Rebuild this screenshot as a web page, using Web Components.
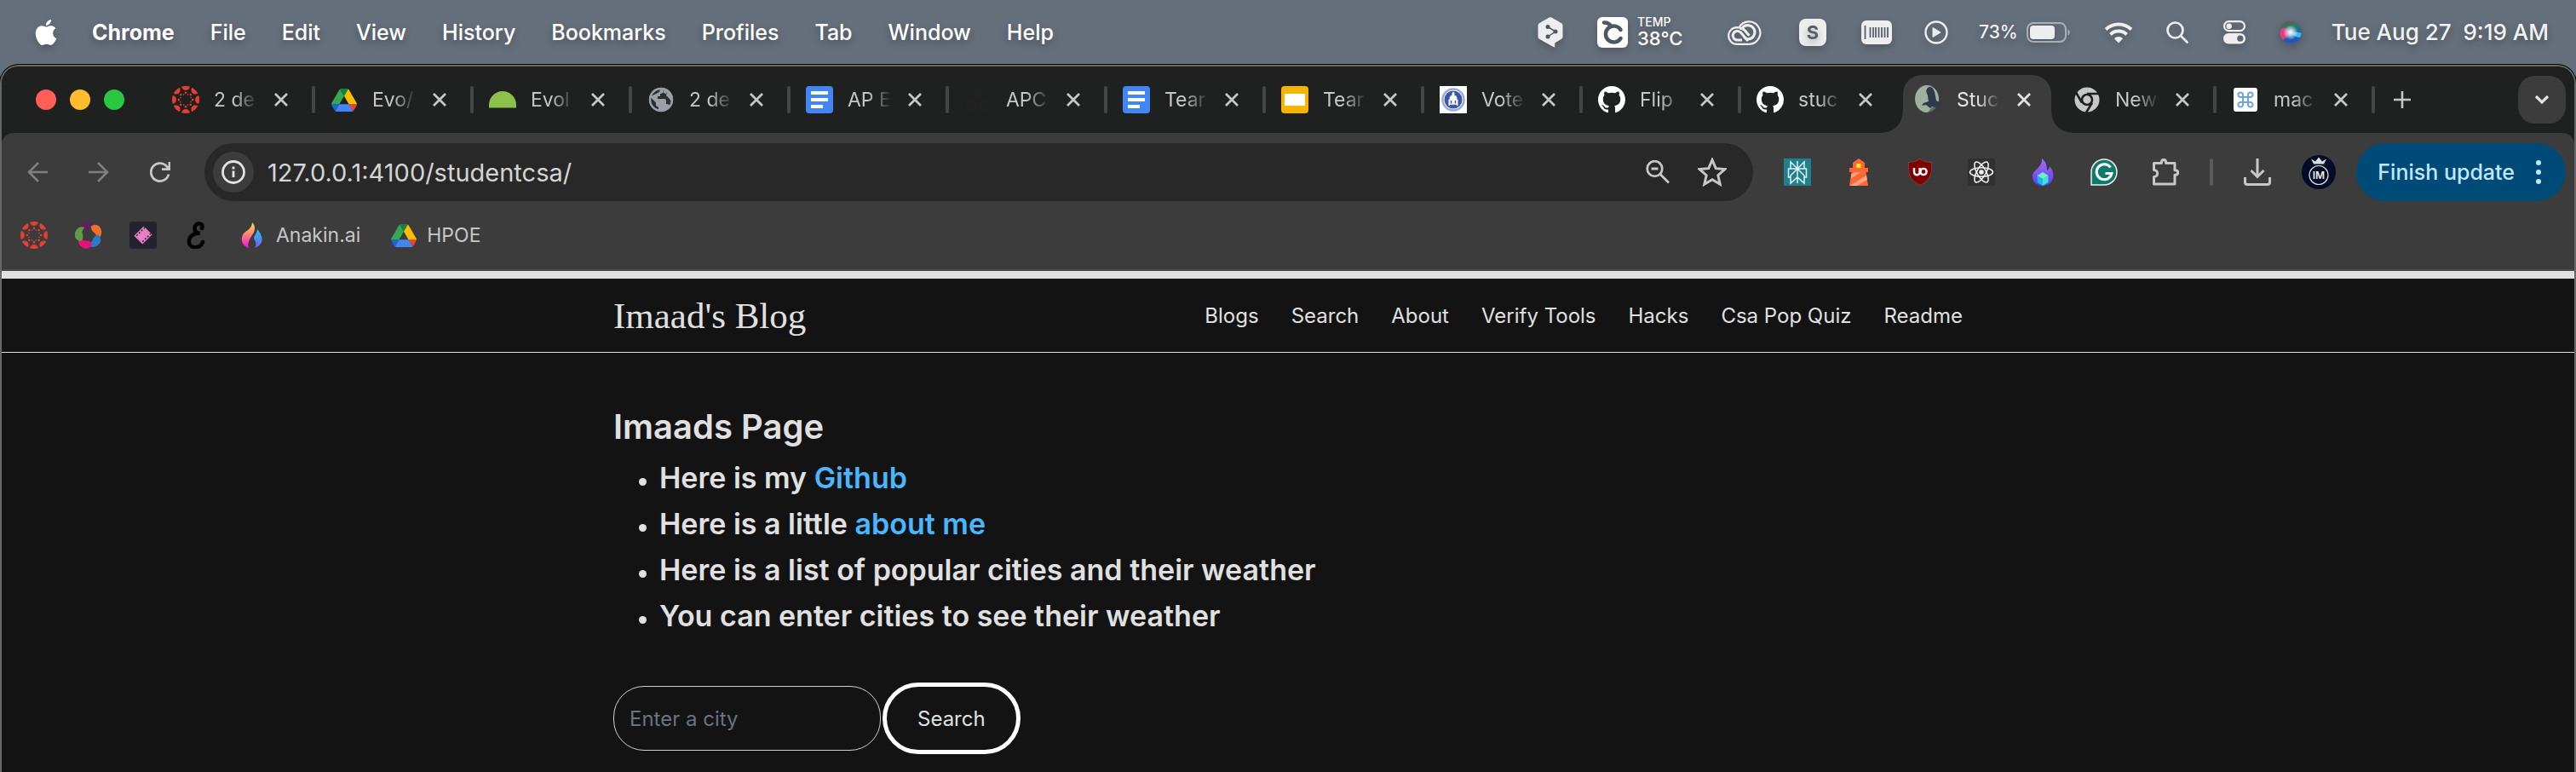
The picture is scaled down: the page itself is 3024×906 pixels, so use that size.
<!DOCTYPE html>
<html lang="en">
<head>
<meta charset="utf-8">
<title>Studentcsa | Imaad's Blog</title>
<style>
  html, body { margin: 0; min-height: 100vh; background: #131313; }
  body { font-family: Inter, "Liberation Sans", sans-serif; color: #e0e0e0; display: flex; flex-direction: column; background: linear-gradient(#656f7b 100px, #131313 100px); }
  browser-window { flex: 1; }
</style>
</head>
<body>
<mac-menu-bar></mac-menu-bar>
<browser-window>
  <tab-strip slot="chrome">
    <browser-tab icon="canvas" label="2 de"></browser-tab>
    <browser-tab icon="drive" label="Evo/"></browser-tab>
    <browser-tab icon="evol" label="Evol"></browser-tab>
    <browser-tab icon="globe" label="2 de"></browser-tab>
    <browser-tab icon="docs" label="AP E"></browser-tab>
    <browser-tab icon="faint" label="APC"></browser-tab>
    <browser-tab icon="docs" label="Tear"></browser-tab>
    <browser-tab icon="slides" label="Tear"></browser-tab>
    <browser-tab icon="seal" label="Vote"></browser-tab>
    <browser-tab icon="github" label="Flip"></browser-tab>
    <browser-tab icon="github" label="stuc"></browser-tab>
    <browser-tab icon="student" label="Stuc" active></browser-tab>
    <browser-tab icon="chrome" label="New"></browser-tab>
    <browser-tab icon="command" label="mac"></browser-tab>
  </tab-strip>
  <tool-bar slot="chrome"></tool-bar>
  <bookmark-bar slot="chrome"></bookmark-bar>
  <site-header></site-header>
  <site-page></site-page>
</browser-window>

<script>
const turn = (n, shape, start = 0) => Array.from({ length: n }, (_, i) => `<g transform="rotate(${start + i * 360 / n} 16 16)">${shape}</g>`).join('');

const ICONS = {
  apple: ['0 0 24 24', `<path fill="#fff" d="M12.152 6.896c-.948 0-2.415-1.078-3.96-1.04-2.04.027-3.91 1.183-4.961 3.014-2.117 3.675-.546 9.103 1.519 12.09 1.013 1.454 2.208 3.09 3.792 3.039 1.52-.065 2.09-.987 3.935-.987 1.831 0 2.35.987 3.96.948 1.637-.026 2.676-1.48 3.676-2.948 1.156-1.688 1.636-3.325 1.662-3.415-.039-.013-3.182-1.221-3.22-4.857-.026-3.04 2.48-4.494 2.597-4.559-1.429-2.09-3.623-2.324-4.39-2.376-2-.156-3.675 1.09-4.61 1.09zM15.53 3.83c.843-1.012 1.4-2.427 1.245-3.83-1.207.052-2.662.805-3.532 1.818-.78.896-1.454 2.338-1.273 3.714 1.338.104 2.715-.688 3.559-1.701"/>`],
  deepl: ['0 0 30 36', `<path fill="#eee" d="M13.5.6a3 3 0 0 1 3 0L28 7.3a3 3 0 0 1 1.5 2.6v13.3a3 3 0 0 1-1.5 2.6l-7.8 4.6v5.4l-5-2.6L2 25.8a3 3 0 0 1-1.500-2.600V9.900A3 3 0 0 1 2 7.300z"/><g stroke="#4d5763" stroke-width="1.500" fill="none"><path d="M12 11.500l9 5.500-9 6"/></g><g fill="#4d5763"><circle cx="12" cy="11.500" r="2.500"/><circle cx="21" cy="17" r="2.500"/><circle cx="12" cy="23" r="2.500"/></g>`],
  temp: ['0 0 36 36', `<rect width="36" height="36" rx="6" fill="#fff"/><path d="M8 6.500c3 0 6 1 8 4" stroke="#4d5763" stroke-width="4.500" fill="none" stroke-linecap="round"/><path d="M27.500 15a9.500 9.500 0 1 0 0 10" stroke="#4d5763" stroke-width="4.500" fill="none" stroke-linecap="round"/>`],
  cloud: ['0 0 40 30', `<g fill="none" stroke="#eee" stroke-width="2.200"><path d="M11 28.800a9.800 9.800 0 0 1 0-19.600l2.500.2A13.200 13.200 0 1 1 26 28.800z"/><g stroke-width="3"><path d="M17 24h-5.500a5.300 5.300 0 1 1 3.900-8.900L24 25"/><path d="M17.500 9.500a8.200 8.200 0 1 1 7 13.500c-2.200 0-3.800-1-5-2.500M14 10c3 .2 5 1.300 6.500 3l5 5.800"/></g></g>`],
  sBox: ['0 0 32 32', `<rect width="32" height="32" rx="8" fill="#eee"/><text x="16" y="24" text-anchor="middle" font-family="Inter" font-weight="700" font-size="22" fill="#56606c">S</text>`],
  barcode: ['0 0 36 28', `<rect width="36" height="28" rx="6" fill="#eee"/><path d="M4.500 6v16M10.500 8v12M14 8v12M17 8v12M20.500 8v12M24 8v12M27.500 8v12M31 8v12" stroke="#56606c" stroke-width="1.800"/>`],
  play: ['0 0 28 28', `<circle cx="14" cy="14" r="12.500" fill="none" stroke="#eee" stroke-width="2.400"/><path d="M10 8.500v11l9-5.500z" fill="#eee" stroke="#eee" stroke-linejoin="round"/>`],
  battery: ['0 0 52 24', `<rect x="1" y="1" width="45" height="22" rx="7" fill="none" stroke="#a9afb6" stroke-width="2"/><rect x="4" y="4" width="29" height="16" rx="4" fill="#eee"/><path d="M48.500 8.500c3 1 3 6 0 7z" fill="#a9afb6"/>`],
  wifi: ['0 0 34 26', `<g fill="none" stroke="#eee" stroke-width="4"><path d="M2 9.500a21.500 21.500 0 0 1 30 0"/><path d="M7.500 15.500a13.500 13.500 0 0 1 19 0"/></g><path d="M17 25.500l-5.200-5.300a7.500 7.500 0 0 1 10.400 0z" fill="#eee"/>`],
  lens: ['0 0 26 26', `<g fill="none" stroke="#eee" stroke-width="2.700" stroke-linecap="round"><circle cx="10.500" cy="10.500" r="9"/><path d="M17 17l7.500 7.500"/></g>`],
  control: ['0 0 28 28', `<rect x="2" y="1.200" width="24" height="11" rx="5.500" fill="none" stroke="#eee" stroke-width="2.200"/><circle cx="7.700" cy="6.700" r="3.200" fill="#eee"/><rect x="1" y="15" width="26" height="12.500" rx="6.200" fill="#eee"/><circle cx="20.800" cy="21.200" r="3.600" fill="#5d6773"/>`],
  siri: ['0 0 28 28', `<defs><radialGradient id="a"><stop offset="0" stop-color="#fff"/><stop offset=".35" stop-color="#dfeeff" stop-opacity=".8"/><stop offset="1" stop-color="#fff" stop-opacity="0"/></radialGradient><linearGradient id="b" x2=".3" y2="1"><stop stop-color="#553"/><stop offset=".35" stop-color="#2a7c6a"/><stop offset="1" stop-color="#1557c8"/></linearGradient></defs><circle cx="14" cy="14" r="13.500" fill="url(#b)"/><path d="M1 15C3 6 9 8 14 14c-3 6-7 7-9 9a13 13 0 0 1-4-8z" fill="#e23f80"/><path d="M27 15c-3-1-7-2-12 0 4 4 7 5 10 5a13 13 0 0 0 2-5z" fill="#35bdf0"/><circle cx="14" cy="14" r="8.500" fill="url(#a)"/><circle cx="14" cy="14" r="13" fill="none" stroke="#a34a68" stroke-opacity=".6"/>`],
  canvas: ['0 0 32 32', `<clipPath id="c"><circle cx="16" cy="16" r="16"/></clipPath><g fill="#e63e2f" clip-path="url(#c)">${turn(8, '<circle cx="16" cy="0" r="4.900"/>')}${turn(8, '<circle cx="16" cy="7.800" r="1.300"/>')}${turn(8, '<circle cx="16" cy="9.400" r=".8"/>', 22.5)}</g>`],
  drive: ['0 0 87.3 78', `<path fill="#1967d2" d="M6.600 66.850l3.850 6.650c.8 1.400 1.950 2.500 3.300 3.300L27.500 53H0c0 1.550.4 3.100 1.200 4.500z"/><path fill="#34a853" d="M43.650 25L29.900 1.200c-1.350.8-2.500 1.900-3.300 3.300l-25.400 44A9.060 9.060 0 0 0 0 53h27.500z"/><path fill="#ea4335" d="M73.550 76.800c1.350-.8 2.500-1.900 3.300-3.300l1.600-2.750 7.650-13.250c.8-1.400 1.200-2.950 1.200-4.500H59.800l5.850 11.500z"/><path fill="#188038" d="M43.650 25L57.400 1.200C56.050.4 54.500 0 52.900 0H34.400c-1.600 0-3.150.45-4.500 1.200z"/><path fill="#4285f4" d="M59.800 53H27.500L13.750 76.800c1.350.8 2.900 1.200 4.500 1.200h50.800c1.600 0 3.150-.45 4.500-1.200z"/><path fill="#fbbc04" d="M73.400 26.500l-12.700-22c-.8-1.400-1.950-2.500-3.300-3.300L43.650 25 59.800 53h27.450c0-1.550-.4-3.100-1.200-4.500z"/>`],
  evol: ['0 0 32 32', `<path fill="#8bc34a" d="M0 25.500V22a16 16 0 0 1 32 0v3.500z"/>`],
  globe: ['0 0 32 32', `<circle cx="16" cy="16" r="14" fill="#9aa0a6"/><path fill="#1f2120" d="M13 29.500A13 13 0 0 1 3.500 13L10 19.500v2a3 3 0 0 0 3 3zM19 4c1 3-1 5-4 5v3h-3v3h8a2 2 0 0 1 2 2v4c3 0 4 1 4.500 2.500 3-5 1-13-5.500-17l1 1v2a4 4 0 0 1-3-5.500zM14 7L4 12c2-5 6-8 11-8z" opacity=".9"/><circle cx="16" cy="16" r="13" fill="none" stroke="#9aa0a6" stroke-width="2.500"/><path d="M19 4l4 2-1 5 4 4 2 3V9l-6-6z" fill="#9aa0a6"/>`],
  docs: ['0 0 32 32', `<rect width="32" height="32" rx="4" fill="#4285f4"/><path stroke="#fff" stroke-width="4" d="M6 8h20M6 16h20M6 24h14"/>`],
  slides: ['0 0 32 32', `<rect width="32" height="32" rx="4" fill="#f4b400"/><rect x="4" y="9" width="24" height="14" fill="#fff"/>`],
  faint: ['0 0 32 32', `<g fill="none" stroke="#2c2023" stroke-width="2" stroke-dasharray="2 2"><circle cx="16" cy="8" r="4"/><circle cx="8" cy="23" r="5"/><circle cx="23" cy="23" r="5"/></g>`],
  seal: ['0 0 32 32', `<path fill="#fff" d="M0 0h32v32H0z"/><circle cx="16" cy="16" r="12.500" fill="none" stroke="#9caada" stroke-width="2.500"/><circle cx="16" cy="16" r="10.500" fill="#3c57a6"/><path fill="#fff" d="M16 6.500l1.500 2v2.500c2 0 3 2 3 4v1h1v7h-11v-7h1v-1c0-2 1-4 3-4V8.500z"/><path stroke="#3c57a6" stroke-width="1.500" d="M13.500 17v3.500M18.500 17v3.500M12 22.500h8"/>`],
  github: ['0 0 16 16', `<path fill="#fff" d="M8 0C3.580 0 0 3.580 0 8c0 3.540 2.290 6.530 5.470 7.590.4.070.55-.17.55-.38 0-.19-.01-.82-.01-1.490-2.010.37-2.530-.49-2.690-.94-.09-.23-.48-.94-.82-1.130-.28-.15-.68-.52-.01-.53.63-.01 1.080.58 1.230.82.72 1.210 1.870.87 2.330.66.070-.52.28-.87.51-1.070-1.780-.2-3.640-.89-3.640-3.950 0-.87.31-1.590.82-2.150-.08-.2-.36-1.020.08-2.120 0 0 .67-.21 2.200.82.64-.18 1.320-.27 2-.27s1.360.09 2 .27c1.530-1.040 2.200-.82 2.200-.82.44 1.100.16 1.920.08 2.120.51.56.82 1.270.82 2.150 0 3.070-1.870 3.750-3.650 3.950.29.25.54.73.54 1.480 0 1.070-.01 1.930-.01 2.200 0 .21.15.46.55.38A8.010 8.010 0 0 0 16 8c0-4.420-3.580-8-8-8z"/>`],
  student: ['0 0 32 36', `<ellipse cx="14" cy="17" rx="14" ry="16" fill="#9fb09c"/><path fill="#2d3b4b" d="M17 3c4 0 5 3 6 6l2 10 7 4-4 2 4 11-8-9-4-1-2 2-5-4-5 1 2-3 6-2c-1-4 0-5-2-9s1-8 3-8z"/><path fill="#3c3c3c" d="M20 27l4-2 8 11H12z" opacity=".6"/>`],
  chrome: ['0 0 32 32', `<circle cx="16" cy="16" r="14.500" fill="#c7c7c7"/><circle cx="16" cy="16" r="6" fill="#c7c7c7" stroke="#1f2120" stroke-width="2.600"/><path d="M16 9h14M10 19.500L3 7.500M22 19.500L15 31" stroke="#1f2120" stroke-width="2.600"/>`],
  command: ['0 0 28 28', `<rect width="28" height="28" rx="3" fill="#fff"/><path fill="none" stroke="#6fa3d8" stroke-width="2" d="M11 11H8.500A2.800 2.800 0 1 1 11 8.500v11A2.800 2.800 0 1 1 8.500 17h11A2.800 2.800 0 1 1 17 19.500v-11A2.800 2.800 0 1 1 19.500 11z"/>`],
  close: ['0 0 18 18', `<path d="M2 2l14 14M16 2L2 16" stroke="currentColor" stroke-width="2.800"/>`],
  plus: ['0 0 20 20', `<path d="M10 0v20M0 10h20" stroke="#c7c7c7" stroke-width="2.600"/>`],
  caret: ['0 0 18 12', `<path d="M2 2l7 7 7-7" fill="none" stroke="#e3e3e3" stroke-width="3.200"/>`],
  back: ['0 0 24 24', `<path d="M24 12H2M13 1L2 12l11 11" fill="none" stroke="#7f7f7f" stroke-width="2.600"/>`],
  forward: ['0 0 24 24', `<path d="M0 12h22M11 1l11 11-11 11" fill="none" stroke="#7f7f7f" stroke-width="2.600"/>`],
  reload: ['0 0 24 24', `<path d="M22 14.500A10.500 10.500 0 1 1 20 5.500L22.500 8M23 0v8.700h-9" fill="none" stroke="#c7c7c7" stroke-width="2.800"/>`],
  info: ['0 0 28 28', `<circle cx="14" cy="14" r="12.500" fill="none" stroke="#e3e3e3" stroke-width="2.800"/><path d="M14 12.500V20M14 7.500v3" stroke="#e3e3e3" stroke-width="2.800"/>`],
  zoom: ['0 0 28 28', `<g fill="none" stroke="#c7c7c7" stroke-width="2.800"><circle cx="10.500" cy="10" r="8.800"/><path d="M17 16.500L27 26.500M6.500 10h8"/></g>`],
  star: ['0 0 32 32', `<path d="M16 2.500l4 9.400 10 .9-7.600 6.700 2.300 9.900-8.700-5.200-8.700 5.200 2.300-9.900L2 12.800l10-.9z" fill="none" stroke="#c7c7c7" stroke-width="2.800"/>`],
  perplexity: ['0 0 32 32', `<path fill="#20808d" d="M0 0h32v32H0z"/><path fill="none" stroke="#e0f0f0" stroke-width="1.500" d="M16 3v26M8 4l8 8 8-8v8H8zM8 12H5.500v10H8M24 12h2.500v10H24M16 12l-8 8v9l8-7 8 7v-9z"/>`],
  lighthouse: ['0 0 32 32', `<path fill="#ff6633" d="M16 0l7 5v6h4v5h-2.500L27 32H5l2.500-16H5v-5h4V5z"/><path fill="#ffee22" d="M13.500 6h5v5h-5z"/><path fill="#ffa387" d="M7.200 18.500L12 16h6L7 23.500zM25 20l1 5-12 7H5.500z"/>`],
  ublock: ['0 0 32 32', `<path fill="#800000" stroke="#a05050" stroke-width=".6" d="M16 .5c4 3 8 4 13.500 4 0 12 1 19-13.500 27C1.500 23.500 2.500 16.500 2.500 4.500 8 4.500 12 3.500 16 .5z"/><g fill="none" stroke="#fff" stroke-width="2.400"><path d="M9 11v5a3.300 3.300 0 0 0 6.600 0v-5"/><circle cx="20" cy="15.500" r="3.600"/></g>`],
  react: ['0 0 32 32', `<rect width="32" height="32" rx="2" fill="#303030"/><g fill="none" stroke="#eee" stroke-width="1.600"><ellipse cx="16" cy="16" rx="13.500" ry="5.200"/><ellipse cx="16" cy="16" rx="13.500" ry="5.200" transform="rotate(60 16 16)"/><ellipse cx="16" cy="16" rx="13.500" ry="5.200" transform="rotate(120 16 16)"/></g><circle cx="16" cy="16" r="2.800" fill="#eee"/>`],
  flame: ['0 0 32 32', `<defs><linearGradient id="f" x2="0" y2="1"><stop stop-color="#b06cf2"/><stop offset="1" stop-color="#5040f0"/></linearGradient></defs><path fill="url(#f)" d="M15 0c5 4 6 9 6 14 2-1 3-3 3-5 4 5 5 10 4 14-1 5-5 9-12 9S4 28 4 21c0-8 12-10 11-21z"/><path fill="#6ff0c0" d="M16 16l6.500 4-6.500 4-6.500-4z"/><path fill="#18b8f0" d="M9.500 20l6.500 4v8l-6.500-4z"/><path fill="#3ee0d8" d="M22.500 20L16 24v8l6.500-4z"/>`],
  grammarly: ['0 0 32 32', `<path fill="#0f7a6c" stroke="#eee" stroke-width="1.500" d="M1 31V16A15 15 0 1 1 16 31z"/><path fill="none" stroke="#fff" stroke-width="3" d="M23.500 10.500a9 9 0 1 0 1.500 7h-7.500"/>`],
  puzzle: ['0 0 32 32', `<path fill="none" stroke="#c7c7c7" stroke-width="3" stroke-linejoin="round" d="M2.500 5.500h8.800c0-5.500 5.400-5.500 5.400 0H27v8.300c5 0 5 5.400 0 5.400V30H2.500v-8.500c5.500 0 5.500-8 0-8z"/>`],
  download: ['0 0 32 32', `<path fill="none" stroke="#c7c7c7" stroke-width="3" d="M16 0v21M8.500 14l7.500 7.500L23.500 14M1.500 22v6a2.500 2.500 0 0 0 2.500 2.500h24a2.500 2.500 0 0 0 2.500-2.500v-6"/>`],
  profile: ['0 0 40 40', `<circle cx="20" cy="20" r="20" fill="#020c26"/><circle cx="20" cy="23.500" r="11" fill="none" stroke="#ddd" stroke-width="1.200"/><path fill="#ddd" d="M14 10.500l-3-6 5 3 4-5 4 5 5-3-3 6z"/><text x="20" y="28" text-anchor="middle" font-family="Inter" font-weight="600" font-size="12" fill="#eee">IM</text>`],
  dots: ['0 0 8 28', `<g fill="#c2e7ff"><circle cx="4" cy="3" r="3"/><circle cx="4" cy="14" r="3"/><circle cx="4" cy="25" r="3"/></g>`],
  pinwheel: ['0 0 32 32', `${[['#5b2163', 0], ['#f36f26', 72], ['#2a7bc4', 144], ['#e5127d', 216], ['#5f9c45', 288]].map(([c, a]) => `<path fill="${c}" transform="rotate(${a} 16 16)" d="M7 10C5 4 9 0 14 0c6 0 10 4 9 9-2-2-6-2-8 0-3 2-6 2-8 1z"/>`).join('')}`],
  film: ['0 0 32 32', `<rect width="32" height="32" rx="3" fill="#23222d"/><g transform="rotate(45 16 16)"><rect x="9" y="8" width="14" height="16" fill="#e87fc4"/><path stroke="#23222d" stroke-width="1.500" stroke-dasharray="2 2" d="M11 8v16M21 8v16"/></g>`],
  script: ['0 0 32 32', `<path fill="none" stroke="#000" stroke-width="4.500" stroke-linecap="round" d="M21 8c3-7-8-8-8.500 0 0 4 3 6 6 5.500C10 13 5 19 6 25c1 7 14 7 16-1"/>`],
  anakin: ['0 0 32 32', `<defs><linearGradient id="h" x2="0" y2="1"><stop stop-color="#ffe04a"/><stop offset=".5" stop-color="#ff7a7a"/><stop offset="1" stop-color="#f010e0"/></linearGradient><linearGradient id="i" x2="0" y2="1"><stop stop-color="#20c8ff"/><stop offset="1" stop-color="#7a58f0"/></linearGradient></defs><path fill="url(#h)" d="M16 1c5 5 3 11 0 15-3 5-6 9-4 15C1 27 3 17 7 13c4-3 9-6 9-12z"/><path fill="url(#i)" d="M22 9c6 7 10 17-3 22 3-4 1-8-1-11 0-4 4-6 4-11z"/>`],
};

const define = (name, html, setup) => {
  const template = document.createElement('template');
  template.innerHTML = html;
  customElements.define(name, class extends HTMLElement {
    connectedCallback() {
      if (this.shadowRoot) return;
      this.attachShadow({ mode: 'open' }).append(template.content.cloneNode(true));
      if (setup) setup(this, this.shadowRoot);
    }
  });
};

define('ui-icon', `<style>:host{display:flex;flex:none;align-items:center;justify-content:center}svg{display:block}</style><svg aria-hidden="true"></svg>`, (el, root) => {
  const [box, body] = ICONS[el.getAttribute('name')];
  const svg = root.querySelector('svg');
  svg.setAttribute('viewBox', box);
  svg.setAttribute('width', el.getAttribute('w') || 32);
  svg.setAttribute('height', el.getAttribute('h') || el.getAttribute('w') || 32);
  svg.innerHTML = body;
});

define('mac-menu-bar', `<style>
  :host{display:flex;justify-content:space-between;align-items:center;height:75px;box-sizing:border-box;padding:0 32px 0 38px;background:#656f7b;color:#fff;font-size:25px;font-weight:500;text-shadow:0 4px 8px rgba(0,0,0,.3)}
  ui-icon{filter:drop-shadow(0 4px 4px rgba(0,0,0,.2))}
  nav,.status,.temp,.power{display:flex;align-items:center}
  nav{gap:42px}
  nav ui-icon{width:32px;margin-right:-4px}
  button{all:unset;white-space:nowrap}
  .app{font-weight:700}
  .status{gap:30px;color:#f2f2f2}
  .w36{width:36px}.w38{width:38px}.w40{width:40px}.w50{width:50px}
  .temp{gap:11px;width:118px;color:#fff}
  .temp div{display:flex;flex-direction:column;font-size:22px;line-height:24px}
  .temp small{font-size:14px;line-height:14px}
  .power{gap:10px;padding-right:6px;font-size:21px}
  time{white-space:pre;font-size:26px}
</style>
<nav><ui-icon name="apple" w="30"></ui-icon><button class="app">Chrome</button><button>File</button><button>Edit</button><button>View</button><button>History</button><button>Bookmarks</button><button>Profiles</button><button>Tab</button><button>Window</button><button>Help</button></nav>
<div class="status">
  <ui-icon class="w50" name="deepl" w="30" h="36"></ui-icon>
  <div class="temp"><ui-icon name="temp" w="36"></ui-icon><div><small>TEMP</small><span>38°C</span></div></div>
  <ui-icon class="w50" name="cloud" w="40" h="30"></ui-icon>
  <ui-icon class="w50" name="sBox" w="32"></ui-icon>
  <ui-icon class="w40" name="barcode" w="36" h="28"></ui-icon>
  <ui-icon class="w40" name="play" w="28"></ui-icon>
  <div class="power"><span>73%</span><ui-icon name="battery" w="52" h="24"></ui-icon></div>
  <ui-icon class="w40" name="wifi" w="34" h="26"></ui-icon>
  <ui-icon class="w38" name="lens" w="26"></ui-icon>
  <ui-icon class="w36" name="control" w="28"></ui-icon>
  <ui-icon class="w36" name="siri" w="28"></ui-icon>
  <time>Tue Aug 27  9:19 AM</time>
</div>`);

define('browser-window', `<style>
  :host{display:flex;flex-direction:column;box-sizing:border-box;border:2px solid #666866;border-bottom:0;border-radius:22px 22px 0 0;margin-top:1px;box-shadow:0 0 0 1px #000;background:#131313;overflow:hidden}
  .chrome{display:flex;flex-direction:column;background:#1f2120;border-bottom:9px solid #e0e0e0}
</style><div class="chrome"><slot name="chrome"></slot></div><slot></slot>`);

define('tab-strip', `<style>
  :host{display:flex;align-items:center;height:78px;padding:0 10px 0 40px}
  button{all:unset;display:flex;align-items:center;justify-content:center}
  .new{margin-left:24px;width:20px;height:20px}
  .list{margin-left:auto;width:56px;height:56px;border-radius:20px;background:#3c3c3c}
  .lights{display:flex;flex:none;gap:16px;margin-right:36px}
  .lights i{width:24px;height:24px;border-radius:50%;background:#ff5f57}
  .lights i+i{background:#febc2e}.lights i+i+i{background:#28c840}
</style><div class="lights"><i></i><i></i><i></i></div><slot></slot>
<button class="new" aria-label="New tab"><ui-icon name="plus" w="20"></ui-icon></button>
<button class="list" aria-label="Search tabs"><ui-icon name="caret" w="18" h="12"></ui-icon></button>`);

define('browser-tab', `<style>
  :host{position:relative;display:flex;align-items:center;flex:0 1 186px;min-width:0;height:78px;box-sizing:border-box;padding-left:20px;color:#c7c7c7;font-size:23px}
  :host::after{content:"";position:absolute;right:-2px;top:23px;width:4px;height:32px;border-radius:2px;background:#454746}
  :host([active]){color:#e3e3e3}
  :host([active])::after,:host([before-active])::after{content:none}
  .shape{display:none}
  :host([active]) .shape{display:block;position:absolute;left:-18px;right:-18px;bottom:0;height:68px}
  .shape::before{content:"";position:absolute;inset:0 24px;border-radius:22px 22px 0 0;background:#3c3c3c}
  .shape i{position:absolute;bottom:0;width:24px;height:24px;left:0;background:radial-gradient(circle at 0 0,transparent 23px,#3c3c3c 24px)}
  .shape i+i{left:auto;right:0;background:radial-gradient(circle at 100% 0,transparent 23px,#3c3c3c 24px)}
  ui-icon,span,button{position:relative}
  .fav{width:32px}
  span{width:52px;margin-left:17px;white-space:nowrap;-webkit-mask-image:linear-gradient(90deg,#000 45%,transparent);mask-image:linear-gradient(90deg,#000 45%,transparent)}
  button{all:unset;position:relative;margin-left:18px;color:inherit}
</style><div class="shape"><i></i><i></i></div><span></span><button aria-label="Close tab"><ui-icon name="close" w="18"></ui-icon></button>`, (el, root) => {
  const name = el.getAttribute('icon');
  const fav = document.createElement('ui-icon');
  fav.className = 'fav';
  fav.setAttribute('name', name);
  if (name === 'drive') { fav.setAttribute('w', 30); fav.setAttribute('h', 27); }
  if (name === 'command') fav.setAttribute('w', 28);
  if (name === 'student') fav.setAttribute('h', 36);
  const text = root.querySelector('span');
  text.before(fav);
  text.textContent = el.getAttribute('label');
  if (el.nextElementSibling && el.nextElementSibling.hasAttribute('active')) el.setAttribute('before-active', '');
});

define('tool-bar', `<style>
  :host{display:flex;align-items:center;height:92px;box-sizing:border-box;padding:0 10px 0 22px;background:#3c3c3c;border-radius:14px 14px 0 0}
  button{all:unset;display:flex;align-items:center;justify-content:center}
  .nav{display:flex;gap:32px}.nav button{width:40px;height:40px}
  .box{flex:1;display:flex;align-items:center;height:68px;margin-left:32px;border-radius:34px;background:#282828;box-sizing:border-box;padding:0 32px 0 10px;color:#d4d4d4}
  .site{width:48px;height:48px;border-radius:50%;background:#3c3c3c}
  input{all:unset;flex:1;min-width:0;margin-left:16px;font-size:29px;height:40px}
  .box .end{width:32px;margin-left:32px}
  .ext{display:flex;gap:40px;margin-left:36px}
  .bar{width:4px;height:32px;border-radius:2px;background:#5c5c5c;margin:0 36px}
  .dl{width:32px}
  .me{margin:0 24px 0 36px}
  .update{height:68px;border-radius:34px;background:#004a77;color:#c2e7ff;font-size:25px;font-weight:500;padding:0 28px 0 25px;gap:24px;white-space:nowrap}
</style>
<div class="nav"><button aria-label="Back"><ui-icon name="back" w="24"></ui-icon></button><button aria-label="Forward"><ui-icon name="forward" w="24"></ui-icon></button><button aria-label="Reload"><ui-icon name="reload" w="24"></ui-icon></button></div>
<div class="box"><button class="site" aria-label="Site information"><ui-icon name="info" w="28"></ui-icon></button><input aria-label="Address" value="127.0.0.1:4100/studentcsa/"><button class="end" aria-label="Zoom"><ui-icon name="zoom" w="28"></ui-icon></button><button class="end" aria-label="Bookmark"><ui-icon name="star" w="34"></ui-icon></button></div>
<div class="ext">${['perplexity', 'lighthouse', 'ublock', 'react', 'flame', 'grammarly', 'puzzle'].map(n => `<button aria-label="${n}"><ui-icon name="${n}" w="32"></ui-icon></button>`).join('')}</div>
<div class="bar"></div>
<button class="dl" aria-label="Downloads"><ui-icon name="download" w="32"></ui-icon></button>
<button class="me" aria-label="Profile"><ui-icon name="profile" w="40"></ui-icon></button>
<button class="update">Finish update<ui-icon name="dots" w="8" h="28"></ui-icon></button>`);

define('bookmark-bar', `<style>
  :host{display:flex;align-items:center;gap:32px;height:70px;box-sizing:border-box;padding:0 22px 12px;background:#3c3c3c;border-bottom:2px solid #4a4a4a;color:#c7c7c7;font-size:23px}
  a{display:flex;align-items:center;gap:12px;color:inherit;text-decoration:none}
  .named{margin-right:4px}
</style>
<a href="#canvas" aria-label="Canvas"><ui-icon name="canvas"></ui-icon></a><a href="#pinwheel" aria-label="Pinwheel"><ui-icon name="pinwheel"></ui-icon></a><a href="#film" aria-label="Film"><ui-icon name="film"></ui-icon></a><a href="#script" aria-label="Script"><ui-icon name="script"></ui-icon></a>
<a class="named" href="#anakin"><ui-icon name="anakin"></ui-icon>Anakin.ai</a><a class="named" href="#hpoe"><ui-icon name="drive" w="30" h="27"></ui-icon>HPOE</a>`);

define('site-header', `<style>
  :host{display:block;border-bottom:1px solid #e0e0e0}
  header{display:flex;align-items:center;justify-content:space-between;max-width:1584px;margin:0 auto;height:86px}
  a{color:#e0e0e0;text-decoration:none;white-space:nowrap}
  .title{font-family:"Liberation Serif",serif;font-size:43px}
  nav{display:flex;gap:38px;font-size:24px}
</style><header><a class="title" href="#home">Imaad's Blog</a><nav><a href="#blogs">Blogs</a><a href="#search">Search</a><a href="#about">About</a><a href="#verify">Verify Tools</a><a href="#hacks">Hacks</a><a href="#quiz">Csa Pop Quiz</a><a href="#readme">Readme</a></nav></header>`);

define('site-page', `<style>
  :host{display:block}
  main{max-width:1584px;margin:0 auto;padding:60px 0 20px}
  h2{margin:0 0 6px;font-size:40px;line-height:54px;font-weight:600}
  ul{margin:0;padding:0 0 0 54px;font-size:34px;line-height:54px;font-weight:600;list-style:none}
  li{position:relative}
  li::before{content:"";position:absolute;left:-24px;top:27px;width:9px;height:9px;border-radius:50%;background:#e0e0e0}
  a{color:#4ab6ff;text-decoration:none}
  form{display:flex;align-items:center;gap:2px;margin-top:51px}
  input{width:314px;height:76px;box-sizing:border-box;border:1px solid #d0d0d0;border-radius:36px;background:transparent;color:#e0e0e0;font:24px Inter,sans-serif;padding:0 18px;margin:0}
  input::placeholder{color:#6b7280;opacity:1}
  button{height:84px;box-sizing:border-box;border:5px solid #fff;border-radius:42px;background:transparent;color:#e0e0e0;font:24px Inter,sans-serif;padding:0 36px;margin:0}
</style><main><h2>Imaads Page</h2>
<ul><li>Here is my <a href="#github">Github</a></li><li>Here is a little <a href="#about">about me</a></li><li>Here is a list of popular cities and their weather</li><li>You can enter cities to see their weather</li></ul>
<form><input aria-label="City" placeholder="Enter a city"><button type="button">Search</button></form></main>`);
</script>
</body>
</html>
